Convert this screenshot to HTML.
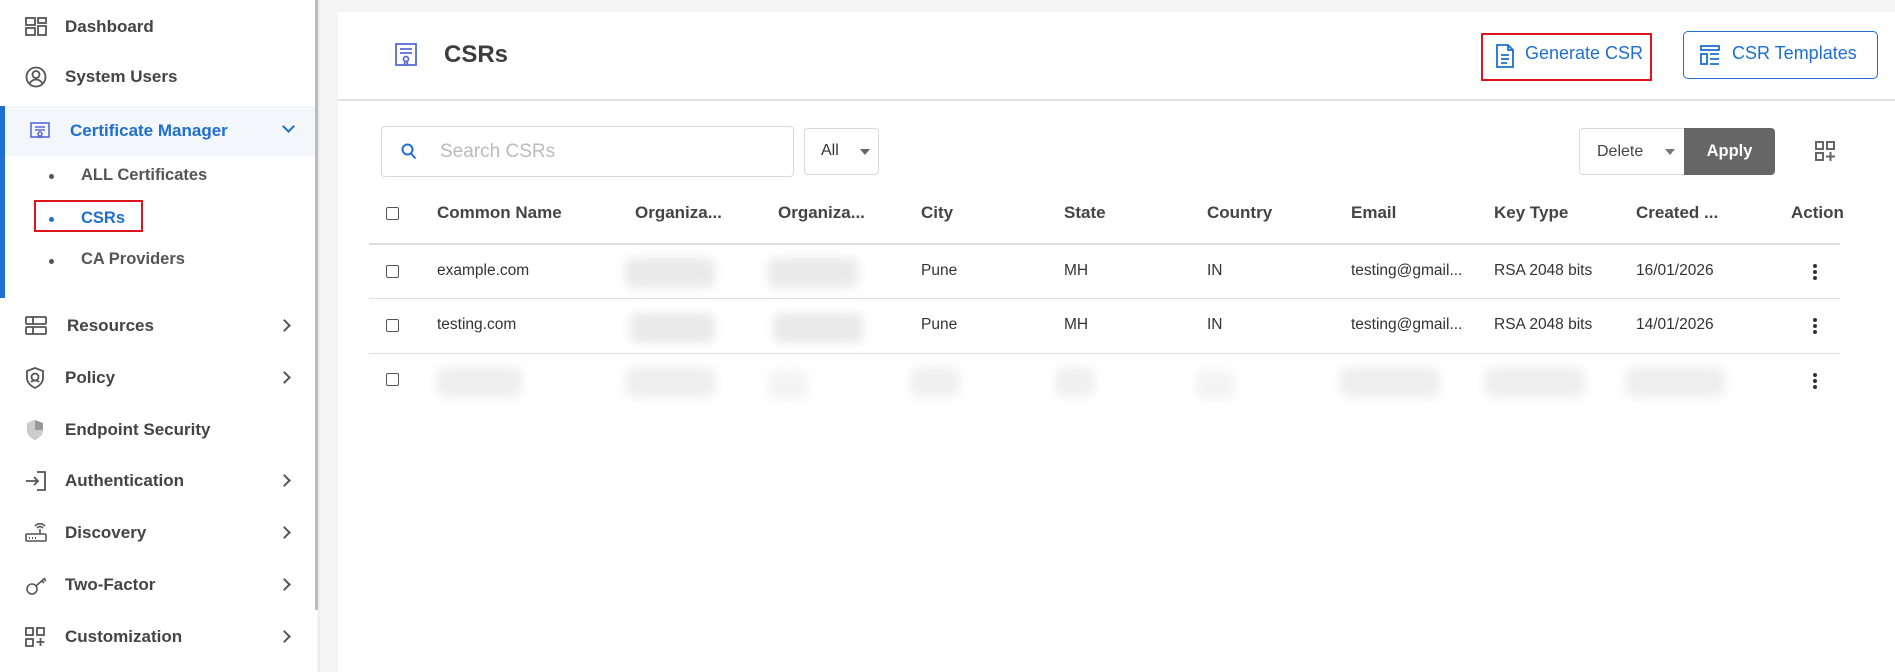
<!DOCTYPE html>
<html><head><meta charset="utf-8"><style>
*{box-sizing:border-box;margin:0;padding:0}
body{width:1895px;height:672px;overflow:hidden;background:#f5f5f5;font-family:"Liberation Sans",sans-serif;position:relative;color:#444}
.sb{position:absolute;left:0;top:0;width:317px;height:672px;background:#fff}
.sbline{position:absolute;left:315px;top:0;width:3px;height:610px;background:#bbb}
.sbline2{position:absolute;left:318px;top:0;width:2px;height:672px;background:#eee}
.it{position:absolute;left:0;width:317px;height:30px;display:flex;align-items:center;font-size:17px;font-weight:bold;color:#444}
.it svg{position:absolute;left:25px}
.it span{position:absolute;left:65px}
.chev{position:absolute;left:280px;width:9px;height:9px;border-right:2px solid #555;border-bottom:2px solid #555;transform:rotate(-45deg)}
.sub{position:absolute;left:81px;font-size:16.5px;font-weight:bold;color:#555}
.dot{position:absolute;left:49px;width:5px;height:5px;border-radius:50%;background:#555}
.card{position:absolute;left:338px;top:12px;width:1557px;height:660px;background:#fff}
.abs{position:absolute}
.th{position:absolute;top:203px;font-size:17px;font-weight:bold;color:#444}
.td{position:absolute;font-size:15.5px;color:#333}
.cb{position:absolute;left:386px;width:13px;height:13px;border:1.5px solid #555;border-radius:2px}
.hl{position:absolute;left:369px;width:1471px;height:1px;background:#ddd}
.blur{position:absolute;height:30px;background:#e9e9e9;filter:blur(5px);border-radius:8px}
.kb{position:absolute;left:1813px;width:4px;height:4px;border-radius:50%;background:#333}
</style></head><body>
<div class="sb">
<div class="it" style="top:12px"><svg width="22" height="20" viewBox="0 0 22 20" fill="none" stroke="#555" stroke-width="1.8"><rect x="1" y="1" width="9" height="7"/><rect x="13" y="1" width="8" height="5"/><rect x="1" y="11" width="9" height="7"/><rect x="13" y="9" width="8" height="9"/></svg><span>Dashboard</span></div>
<div class="it" style="top:62px"><svg width="22" height="22" viewBox="0 0 22 22" fill="none" stroke="#555" stroke-width="1.8"><circle cx="11" cy="11" r="9.5"/><circle cx="11" cy="8.5" r="3.5"/><path d="M4.5 17.5c2-3 4-4 6.5-4s4.5 1 6.5 4"/></svg><span>System Users</span></div>
<div class="abs" style="left:0;top:106px;width:317px;height:50px;background:#f3f6fb"></div>
<div class="abs" style="left:0;top:106px;width:5px;height:192px;background:#1e6fd0"></div>
<div class="it" style="top:116px;color:#1e6fd0"><svg style="left:30px" width="20" height="18" viewBox="0 0 20 18" fill="none" stroke="#5a6cd8" stroke-width="1.6"><rect x="1" y="1" width="18" height="14"/><path d="M5 5h10M5 8h10"/><circle cx="10" cy="12" r="2"/><path d="M8 16l1-2M12 16l-1-2"/></svg><span style="left:70px">Certificate Manager</span><div class="chev" style="transform:rotate(45deg);left:284px;top:6px;border-color:#1e6fd0"></div></div>
<div class="dot" style="top:174px"></div><div class="sub" style="top:166px">ALL Certificates</div>
<div class="dot" style="top:217px;background:#1e6fd0"></div><div class="sub" style="top:209px;color:#1e6fd0">CSRs</div>
<div class="abs" style="left:34px;top:200px;width:109px;height:32px;border:2px solid #e0141e"></div>
<div class="dot" style="top:259px"></div><div class="sub" style="top:250px">CA Providers</div>
<div class="it" style="top:311px"><svg width="22" height="20" viewBox="0 0 22 20" fill="none" stroke="#555" stroke-width="1.8"><rect x="1" y="1" width="20" height="7" rx="1"/><rect x="1" y="11" width="20" height="7" rx="1"/><path d="M8 1v7M8 11v7"/></svg><span style="left:67px">Resources</span><div class="chev" style="top:10px"></div></div>
<div class="it" style="top:363px"><svg width="20" height="22" viewBox="0 0 20 22" fill="none" stroke="#555" stroke-width="1.8"><path d="M10 1l8 3v7c0 5-4 8-8 10-4-2-8-5-8-10V4z"/><circle cx="10" cy="10" r="3.5"/><path d="M6 15c2-2 6-2 8 0"/></svg><span>Policy</span><div class="chev" style="top:10px"></div></div>
<div class="it" style="top:415px"><svg width="20" height="22" viewBox="0 0 20 22"><path d="M10 1l8 3v7c0 5-4 8-8 10-4-2-8-5-8-10V4z" fill="#999"/><path d="M10 1v20c-4-2-8-5-8-10V4zM10 11h8c0 5-4 8-8 10z" fill="#ccc"/></svg><span>Endpoint Security</span></div>
<div class="it" style="top:466px"><svg width="22" height="20" viewBox="0 0 22 20" fill="none" stroke="#555" stroke-width="1.8"><path d="M1 10h12M9 6l4 4-4 4M12 1h8v18h-8"/></svg><span>Authentication</span><div class="chev" style="top:10px"></div></div>
<div class="it" style="top:518px"><svg width="22" height="20" viewBox="0 0 22 20" fill="none" stroke="#555" stroke-width="1.6"><rect x="1" y="11" width="20" height="7" rx="1"/><path d="M15 11V6M12 5c2-2 4-2 6 0M10 3c3-3 7-3 10 0"/><path d="M4 15h1M7 15h1M10 15h1" stroke-width="2"/></svg><span>Discovery</span><div class="chev" style="top:10px"></div></div>
<div class="it" style="top:570px"><svg width="24" height="20" viewBox="0 0 24 20" fill="none" stroke="#555" stroke-width="1.6"><circle cx="7" cy="14" r="5"/><path d="M11 11l9-8M17 6l2 2M19 4l2 2"/></svg><span>Two-Factor</span><div class="chev" style="top:10px"></div></div>
<div class="it" style="top:622px"><svg width="22" height="20" viewBox="0 0 22 20" fill="none" stroke="#555" stroke-width="1.8"><rect x="1" y="1" width="7" height="7"/><rect x="12" y="1" width="7" height="7"/><rect x="1" y="12" width="7" height="7"/><path d="M15.5 11v8M11.5 15h8"/></svg><span>Customization</span><div class="chev" style="top:10px"></div></div>
</div>
<div class="sbline2"></div><div class="sbline"></div>

<div class="card"></div>
<svg class="abs" style="left:394px;top:42px" width="24" height="26" viewBox="0 0 24 26" fill="none" stroke="#5a6cd8" stroke-width="1.8"><rect x="2" y="2" width="20" height="21"/><path d="M6 7h12M6 11h12"/><circle cx="12" cy="17" r="2.5"/><path d="M10 24l1-4M14 24l-1-4"/></svg>
<div class="abs" style="left:444px;top:41px;font-size:24px;font-weight:bold;color:#3d3d3d">CSRs</div>
<div class="abs" style="left:1481px;top:33px;width:171px;height:48px;border:2px solid #e0141e"></div>
<svg class="abs" style="left:1496px;top:44px" width="18" height="24" viewBox="0 0 18 24" fill="none" stroke="#1e6fd0" stroke-width="1.8"><path d="M1 1h11l5 5v17H1z M12 1v5h5"/><path d="M5 11h8M5 15h8M5 19h6"/></svg>
<div class="abs" style="left:1525px;top:43px;font-size:18px;color:#1e6fd0">Generate CSR</div>
<div class="abs" style="left:1683px;top:31px;width:195px;height:48px;border:1.5px solid #1e6fd0;border-radius:5px"></div>
<svg class="abs" style="left:1700px;top:45px" width="20" height="20" viewBox="0 0 20 20" fill="none" stroke="#1e6fd0" stroke-width="1.8"><rect x="1" y="1" width="18" height="4"/><rect x="1" y="9" width="6" height="10"/><path d="M10 9h9M10 14h9M10 19h9"/></svg>
<div class="abs" style="left:1732px;top:43px;font-size:18px;color:#1e6fd0">CSR Templates</div>
<div class="abs" style="left:338px;top:99px;width:1557px;height:2px;background:#e2e2e2"></div>

<div class="abs" style="left:381px;top:126px;width:413px;height:51px;border:1px solid #d8d8d8;border-radius:4px"></div>
<svg class="abs" style="left:401px;top:143px" width="16" height="17" viewBox="0 0 16 17" fill="none" stroke="#1e6fd0" stroke-width="2"><circle cx="6.5" cy="6.5" r="5"/><path d="M10 10.5l4.5 5"/></svg>
<div class="abs" style="left:440px;top:141px;font-size:19px;color:#bbb">Search CSRs</div>
<div class="abs" style="left:804px;top:128px;width:75px;height:47px;border:1px solid #d8d8d8;border-radius:4px"></div>
<div class="abs" style="left:821px;top:142px;font-size:16px;color:#333">All</div>
<div class="abs" style="left:860px;top:149px;border-left:5px solid transparent;border-right:5px solid transparent;border-top:6px solid #666"></div>
<div class="abs" style="left:1579px;top:128px;width:106px;height:47px;border:1px solid #d8d8d8;border-radius:4px 0 0 4px"></div>
<div class="abs" style="left:1597px;top:143px;font-size:16px;color:#444">Delete</div>
<div class="abs" style="left:1665px;top:149px;border-left:5px solid transparent;border-right:5px solid transparent;border-top:6px solid #777"></div>
<div class="abs" style="left:1684px;top:128px;width:91px;height:47px;background:#666;border-radius:0 4px 4px 0;color:#fff;font-size:16.5px;font-weight:bold;text-align:center;line-height:47px">Apply</div>
<svg class="abs" style="left:1815px;top:141px" width="22" height="22" viewBox="0 0 22 22" fill="none" stroke="#666" stroke-width="2"><rect x="1" y="1" width="7" height="7"/><rect x="12" y="1" width="7" height="7"/><rect x="1" y="12" width="7" height="7"/><path d="M15.5 11v9M11 15.5h9"/></svg>

<div class="cb" style="top:207px"></div>
<div class="th" style="left:437px">Common Name</div>
<div class="th" style="left:635px">Organiza...</div>
<div class="th" style="left:778px">Organiza...</div>
<div class="th" style="left:921px">City</div>
<div class="th" style="left:1064px">State</div>
<div class="th" style="left:1207px">Country</div>
<div class="th" style="left:1351px">Email</div>
<div class="th" style="left:1494px">Key Type</div>
<div class="th" style="left:1636px">Created ...</div>
<div class="th" style="left:1791px">Action</div>
<div class="hl" style="top:243px;height:2px"></div>

<div class="cb" style="top:265px"></div>
<div class="td" style="left:437px;top:262px">example.com</div>
<div class="blur" style="left:625px;top:258px;width:90px"></div>
<div class="blur" style="left:768px;top:258px;width:90px"></div>
<div class="td" style="left:921px;top:262px">Pune</div><div class="td" style="left:1064px;top:262px">MH</div><div class="td" style="left:1207px;top:262px">IN</div>
<div class="td" style="left:1351px;top:262px">testing@gmail...</div><div class="td" style="left:1494px;top:262px">RSA 2048 bits</div><div class="td" style="left:1636px;top:262px">16/01/2026</div>
<div class="kb" style="top:264px"></div><div class="kb" style="top:270px"></div><div class="kb" style="top:276px"></div>
<div class="hl" style="top:298px"></div>

<div class="cb" style="top:319px"></div>
<div class="td" style="left:437px;top:316px">testing.com</div>
<div class="blur" style="left:630px;top:313px;width:85px"></div>
<div class="blur" style="left:773px;top:313px;width:90px"></div>
<div class="td" style="left:921px;top:316px">Pune</div><div class="td" style="left:1064px;top:316px">MH</div><div class="td" style="left:1207px;top:316px">IN</div>
<div class="td" style="left:1351px;top:316px">testing@gmail...</div><div class="td" style="left:1494px;top:316px">RSA 2048 bits</div><div class="td" style="left:1636px;top:316px">14/01/2026</div>
<div class="kb" style="top:318px"></div><div class="kb" style="top:324px"></div><div class="kb" style="top:330px"></div>
<div class="hl" style="top:353px"></div>

<div class="cb" style="top:373px"></div>
<div class="blur" style="left:437px;top:367px;width:85px;background:#eee"></div>
<div class="blur" style="left:625px;top:367px;width:90px;background:#eee"></div>
<div class="blur" style="left:768px;top:370px;width:40px;background:#f4f4f4"></div>
<div class="blur" style="left:910px;top:367px;width:50px;background:#f0f0f0"></div>
<div class="blur" style="left:1055px;top:367px;width:40px;background:#f0f0f0"></div>
<div class="blur" style="left:1195px;top:370px;width:40px;background:#f4f4f4"></div>
<div class="blur" style="left:1340px;top:367px;width:100px;background:#eee"></div>
<div class="blur" style="left:1485px;top:367px;width:100px;background:#eee"></div>
<div class="blur" style="left:1625px;top:367px;width:100px;background:#eee"></div>
<div class="kb" style="top:373px"></div><div class="kb" style="top:379px"></div><div class="kb" style="top:385px"></div>
</body></html>
